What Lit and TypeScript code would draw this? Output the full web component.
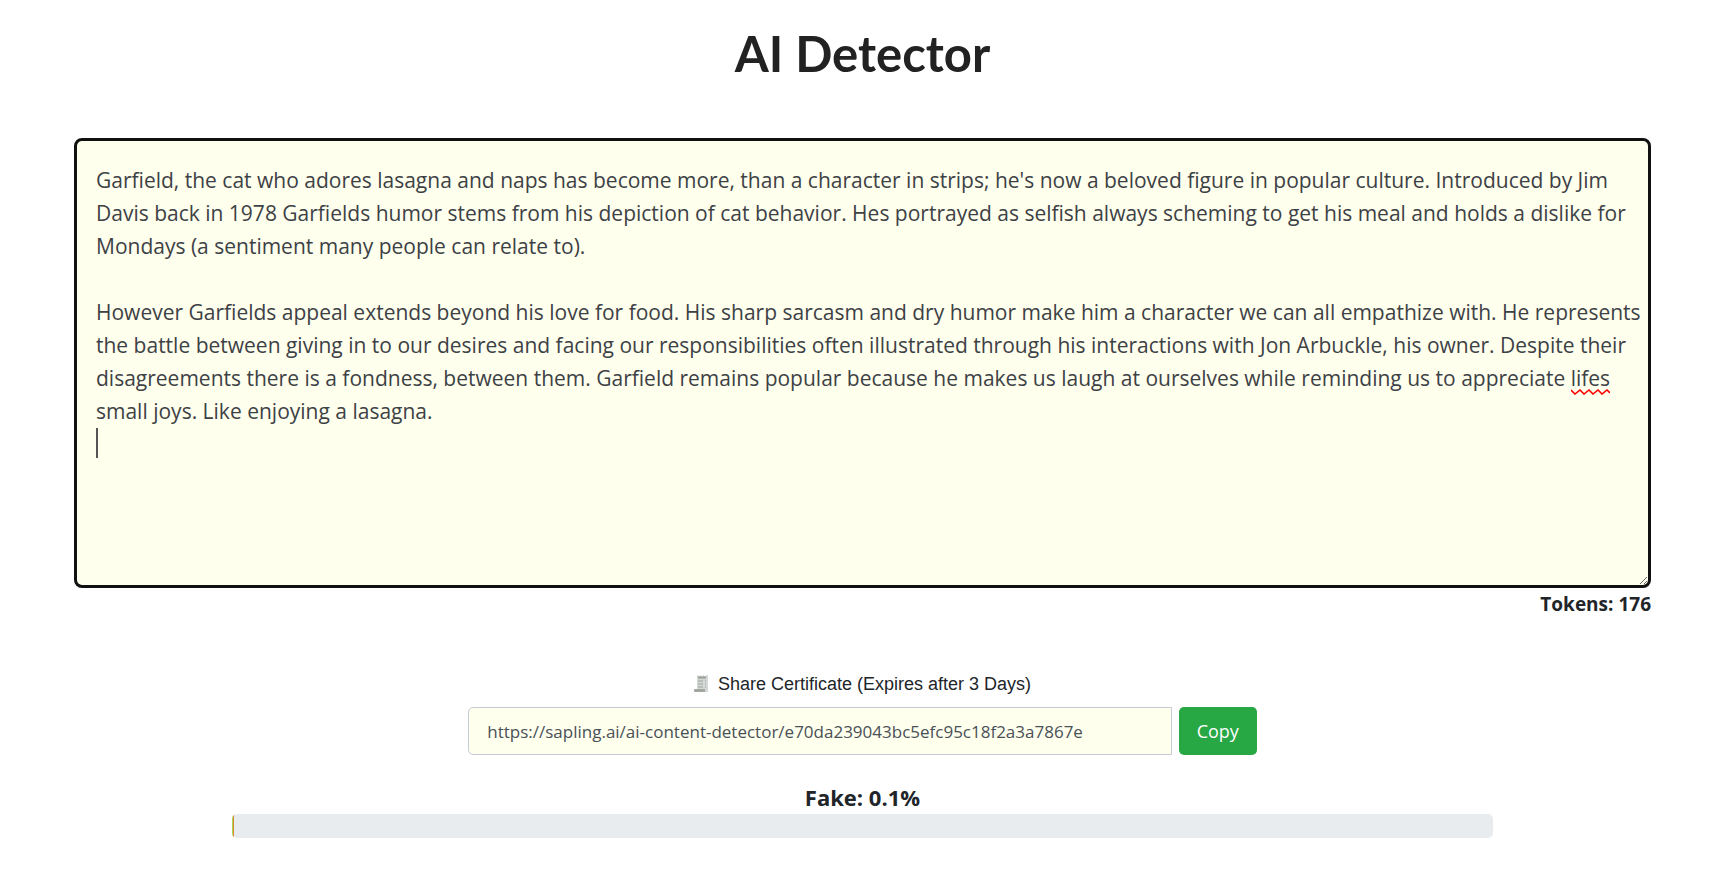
import { LitElement, html, css } from "lit";
import { customElement, state } from "lit/decorators.js";

const SAMPLE = `Garfield, the cat who adores lasagna and naps has become more, than a character in strips; he's now a beloved figure in popular culture. Introduced by Jim Davis back in 1978 Garfields humor stems from his depiction of cat behavior. Hes portrayed as selfish always scheming to get his meal and holds a dislike for Mondays (a sentiment many people can relate to).

However Garfields appeal extends beyond his love for food. His sharp sarcasm and dry humor make him a character we can all empathize with. He represents the battle between giving in to our desires and facing our responsibilities often illustrated through his interactions with Jon Arbuckle, his owner. Despite their disagreements there is a fondness, between them. Garfield remains popular because he makes us laugh at ourselves while reminding us to appreciate lifes small joys. Like enjoying a lasagna.
`;

@customElement("app-root")
export class AppRoot extends LitElement {
  static styles = css`
    :host {
      display: block;
      box-sizing: border-box;
      padding: 24px 85px 40px 74px;
      background: #fff;
      color: #212529;
      font-family: "Segoe UI", "Open Sans", "Noto Sans", sans-serif;
    }
    * {
      box-sizing: border-box;
    }
    .title {
      margin: 0 0 56px;
      font-family: Lato, sans-serif;
      font-size: 49px;
      line-height: 58px;
      font-weight: 700;
      color: #222;
      text-align: center;
    }
    .editor {
      position: relative;
      height: 450px;
    }
    .text {
      display: block;
      width: 100%;
      height: 100%;
      margin: 0;
      padding: 23px 3px 23px 19px;
      border: 3px solid #111;
      border-radius: 8px;
      outline: none;
      background: #ffffed;
      color: #3d4146;
      font-family: inherit;
      font-size: 21px;
      line-height: 33px;
      resize: vertical;
    }
    .caret {
      position: absolute;
      left: 22px;
      top: 290px;
      width: 2px;
      height: 30px;
      background: #555;
    }
    .squiggle {
      position: absolute;
      right: 41px;
      top: 251px;
      width: 39px;
      height: 6px;
    }
    .tokens {
      margin: 0 0 52px;
      font-size: 19px;
      line-height: 32px;
      font-weight: 700;
      text-align: right;
    }
    .share {
      width: 50%;
      margin: 0 auto;
    }
    .share-label {
      display: flex;
      justify-content: center;
      align-items: center;
      gap: 8px;
      margin-bottom: 11px;
      font-family: "Liberation Sans", Arial, sans-serif;
      font-size: 18px;
      line-height: 24px;
    }
    .share-row {
      display: flex;
      gap: 7px;
    }
    .url {
      flex: 1;
      min-width: 0;
      height: 48px;
      padding: 0 18px;
      border: 1px solid #c4cbd3;
      border-radius: 5px 0 0 5px;
      background: #ffffed;
      color: #495057;
      font-family: inherit;
      font-size: 17px;
    }
    .copy {
      width: 78px;
      height: 48px;
      padding: 0;
      border: 0;
      border-radius: 5px;
      background: #28a745;
      color: #fff;
      font-family: inherit;
      font-size: 18px;
    }
    .score {
      margin: 26px 0 1px;
      font-size: 22px;
      line-height: 32px;
      font-weight: 700;
      text-align: center;
    }
    .bar {
      display: flex;
      width: 80%;
      height: 24px;
      margin: 0 auto;
      border-radius: 5px;
      background: #e9ecef;
      overflow: hidden;
    }
    .fill {
      background: linear-gradient(90deg, #a5d65c 50%, #d98a2b 50%);
      min-width: 2px;
    }
  `;

  @state() private text = SAMPLE;
  @state() private fake = 0.1;

  render() {
    return html`
      <h1 class="title">AI Detector</h1>
      <div class="editor">
        <textarea
          class="text"
          aria-label="Text to check"
          spellcheck="false"
          .value=${this.text}
        ></textarea>
        <span class="caret"></span>
        <svg class="squiggle" viewBox="0 0 39 6" aria-hidden="true">
          <path d="M0 1L4 5L9 1L13 5L18 1L22 5L27 1L31 5L36 1L39 4" fill="none" stroke="#f00" stroke-width="1.6" />
        </svg>
      </div>
      <p class="tokens">Tokens: 176</p>
      <div class="share">
        <label class="share-label" for="url">
          <svg width="16" height="20" viewBox="1 0 16 20" aria-hidden="true">
            <path d="M4 2V1h1v1h2V1h1v1h2V1h1v1h2V1h2v17H4z" fill="#d3d8d6" />
            <path d="M5 3.500h8" stroke="#9b9f96" stroke-width="2" />
            <path d="M5 7h5M5 10h5M5 13h5M12 7h1M12 10h1M12 13h1" stroke="#9fa39b" />
            <path d="M1 16q0-1 1-1h10v3H2q-1 0-1-1z" fill="#a3a79d" />
          </svg>
          <span>Share Certificate (Expires after 3 Days)</span>
        </label>
        <div class="share-row">
          <input
            class="url"
            id="url"
            type="text"
            readonly
            value="https://sapling.ai/ai-content-detector/e70da239043bc5efc95c18f2a3a7867e"
          />
          <button class="copy" type="button">Copy</button>
        </div>
      </div>
      <p class="score">Fake: ${this.fake}%</p>
      <div class="bar"><div class="fill" style="width:${this.fake}%"></div></div>
    `;
  }
}
